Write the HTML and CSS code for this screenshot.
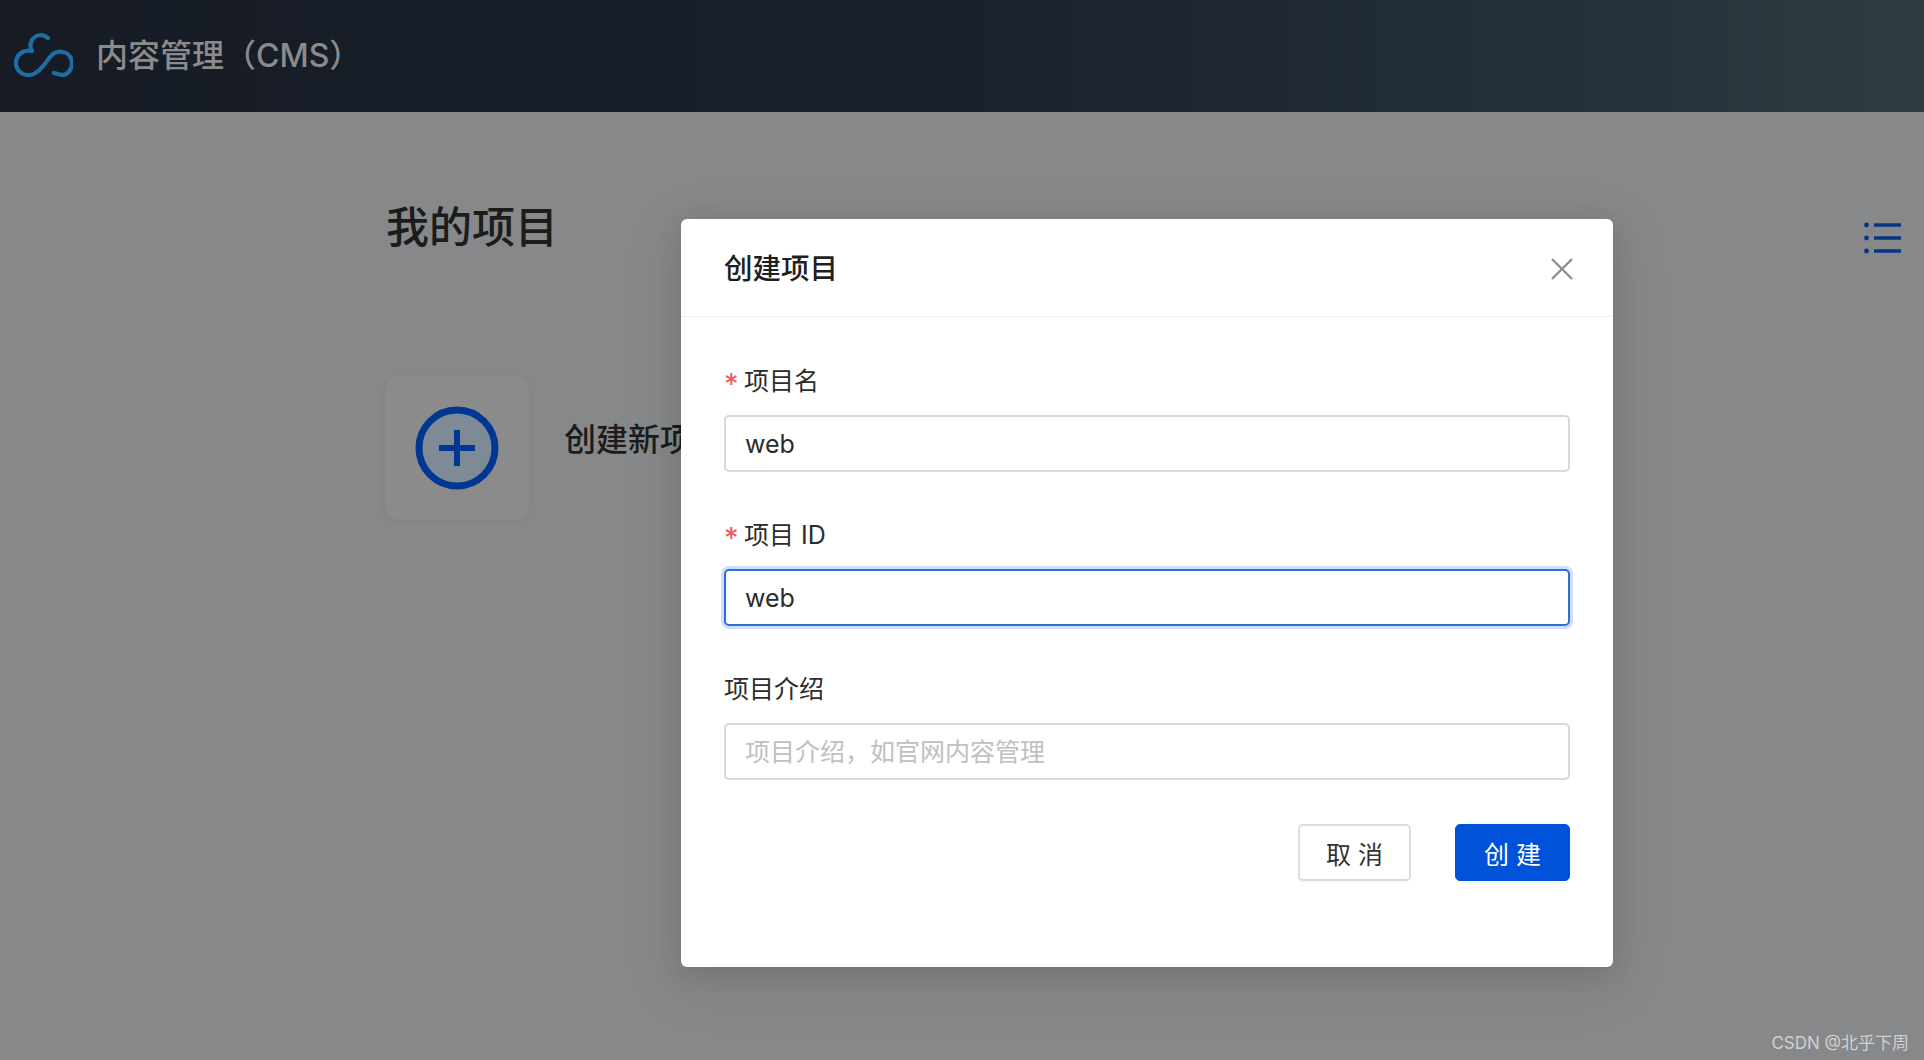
FILE: index.html
```html
<!DOCTYPE html>
<html lang="zh-CN">
<head>
<meta charset="utf-8">
<title>内容管理（CMS）</title>
<link rel="stylesheet" href="styles.css">
</head>
<body>
<div class="page">
  <header class="topbar">
    <svg class="logo" width="60" height="46" viewBox="12 32 60 46" fill="none">
      <path d="M47 37C42 33 35 33 31 39C29 43 29 47 31 50C22 48 15 54 15 62C15 70 22 75 29 74C38 73 44 62 49 56C53 51 58 50 62 51C68 52 71 57 71 63C71 69 66 74 61 74L53 72"/>
    </svg>
    <span class="brand">内容管理（CMS）</span>
  </header>
  <main class="content">
    <div class="title-row">
      <h1 class="page-title">我的项目</h1>
      <svg class="list-icon" width="38" height="32" viewBox="0 0 38 32">
        <circle cx="2.5" cy="3" r="2.4"/><circle cx="2.5" cy="16" r="2.4"/><circle cx="2.5" cy="29" r="2.4"/>
        <path d="M10 3H37M10 16H37M10 29H37"/>
      </svg>
    </div>
    <div class="create-row">
      <div class="create-card">
        <svg width="84" height="84" viewBox="0 0 84 84">
          <circle class="ring" cx="42" cy="42" r="38"/>
          <path class="plus" d="M42 24V60M24 42H60"/>
        </svg>
      </div>
      <span class="create-text">创建新项目</span>
    </div>
  </main>
  <div class="watermark">CSDN @北乎下周</div>
  <section class="modal">
    <div class="modal-head">
      <h2 class="modal-title">创建项目</h2>
      <svg class="close" width="24" height="24" viewBox="0 0 24 24"><path d="M2 2L22 22M22 2L2 22"/></svg>
    </div>
    <form class="modal-body">
      <div class="field">
        <label class="field-label"><span class="star">*</span>项目名</label>
        <input class="text-input" type="text" value="web">
      </div>
      <div class="field">
        <label class="field-label"><span class="star">*</span>项目 ID</label>
        <input class="text-input is-focus" type="text" value="web">
      </div>
      <div class="field">
        <label class="field-label">项目介绍</label>
        <input class="text-input" type="text" placeholder="项目介绍，如官网内容管理">
      </div>
      <div class="actions">
        <button class="btn btn-default" type="button">取 消</button>
        <button class="btn btn-primary" type="button">创 建</button>
      </div>
    </form>
  </section>
</div>
</body>
</html>
```

FILE: styles.css
```css
* { box-sizing: border-box; }
html, body { margin: 0; height: 100%; }
body {
  font-family: Inter, "Noto Sans CJK SC", "Liberation Sans", sans-serif;
  overflow: hidden;
}
.page {
  position: relative;
  width: 100%;
  height: 1060px;
  background: #87888a;
  overflow: hidden;
}
.topbar {
  height: 112px;
  display: flex;
  align-items: center;
  padding-left: 13px;
  gap: 23px;
  background: linear-gradient(90deg, #161b24 0%, #1a212b 50%, #26323a 85%, #2f3d42 100%);
}
.logo { flex: none; }
.logo path { stroke: #1f6ea3; stroke-width: 4.2; stroke-linecap: round; stroke-linejoin: round; }
.brand { font-size: 32px; line-height: 44px; font-weight: 500; color: #8b8b8b; }
.content { padding: 85px 22px 0 385px; }
.title-row { display: flex; justify-content: space-between; align-items: flex-start; }
.page-title {
  margin: 0 0 0 1px;
  font-size: 43px;
  line-height: 61px;
  font-weight: 500;
  color: #1c1c1c;
}
.list-icon { margin-top: 25px; }
.list-icon circle { fill: #063489; }
.list-icon path { stroke: #063489; stroke-width: 3.4; fill: none; }
.create-row { display: flex; align-items: flex-start; gap: 35px; margin-top: 118px; }
.create-card {
  width: 144px;
  height: 144px;
  border-radius: 15px;
  background: #8b8b8b;
  display: flex;
  align-items: center;
  justify-content: center;
  box-shadow: 0 2px 8px rgba(0, 0, 0, 0.04);
}
.ring { fill: #7e8a96; stroke: #003793; stroke-width: 7; }
.plus { fill: none; stroke: #003793; stroke-width: 6; }
.create-text {
  margin-top: 41px;
  font-size: 32px;
  line-height: 46px;
  font-weight: 500;
  color: #1c1c1c;
}
.watermark {
  position: absolute;
  right: 15px;
  bottom: 5px;
  font-size: 17px;
  line-height: 24px;
  color: #d0d0d0;
}
.modal {
  position: absolute;
  left: 681px;
  top: 219px;
  width: 932px;
  height: 748px;
  background: #fff;
  border-radius: 6px;
  box-shadow: 0 14px 56px 10px rgba(0, 0, 0, 0.07), 0 6px 24px rgba(0, 0, 0, 0.1);
}
.modal-head {
  height: 98px;
  padding: 2px 42px 0 43px;
  display: flex;
  align-items: center;
  justify-content: space-between;
  border-bottom: 1px solid #efefef;
}
.modal-title { margin: 0; font-size: 28.5px; line-height: 40px; font-weight: 500; color: #1f1f1f; }
.close { margin-right: -3px; }
.close path { stroke: #8f8f8f; stroke-width: 2.4; fill: none; }
.modal-body { padding: 45px 43px 0; }
.field { margin-bottom: 44px; }
.field-label {
  display: flex;
  align-items: center;
  height: 34px;
  margin-bottom: 19px;
  font-size: 25px;
  color: #2c2c2c;
}
.star { width: 20px; height: 34px; padding-top: 5px; font-size: 29px; line-height: 34px; color: #ef5b64; }
.text-input {
  display: block;
  width: 100%;
  height: 57px;
  padding: 0 19px;
  border: 2px solid #d9d9d9;
  border-radius: 5px;
  outline: none;
  background: #fff;
  font-family: inherit;
  font-size: 25px;
  color: #2c2c2c;
}
.text-input::placeholder { color: #c0c0c0; opacity: 1; }
.is-focus { border-color: #2a6fe0; box-shadow: 0 0 0 3px #cfdff9; }
.actions { display: flex; justify-content: flex-end; gap: 44px; }
.btn {
  height: 57px;
  border-radius: 5px;
  font-family: inherit;
  font-size: 25px;
  padding: 0;
  cursor: pointer;
}
.btn-default { width: 113px; background: #fff; border: 2px solid #dcdcdc; color: #333; box-shadow: 0 2px 2px rgba(0,0,0,.03); }
.btn-primary { width: 115px; background: #0052d9; border: 1px solid #0052d9; color: #fff; }
```
